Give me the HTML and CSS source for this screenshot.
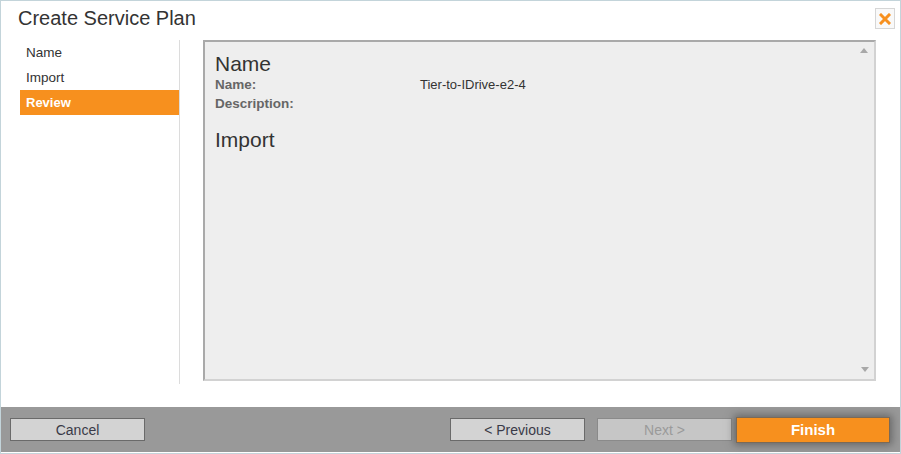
FILE: index.html
```html
<!DOCTYPE html>
<html>
<head>
<meta charset="utf-8">
<link rel="stylesheet" href="styles.css">
</head>
<body>
<div class="dialog">
  <div class="header">
    <div class="title">Create Service Plan</div>
    <button class="close" aria-label="Close">
      <svg width="12" height="12" viewBox="0 0 12 12"><path d="M2 2 L10 10 M10 2 L2 10" stroke="#f7901e" stroke-width="3" stroke-linecap="square"/></svg>
    </button>
  </div>
  <div class="main">
    <ul class="nav">
      <li class="nav-item">Name</li>
      <li class="nav-item">Import</li>
      <li class="nav-item active">Review</li>
    </ul>
    <div class="sep"></div>
    <div class="panel">
      <div class="content">
        <h2 class="section first">Name</h2>
        <div class="row"><span class="label">Name:</span><span class="value">Tier-to-IDrive-e2-4</span></div>
        <div class="row"><span class="label">Description:</span><span class="value"></span></div>
        <h2 class="section">Import</h2>
      </div>
      <div class="scroll">
        <span class="arrow up"></span>
        <span class="arrow down"></span>
      </div>
    </div>
  </div>
  <div class="footer">
    <button class="btn">Cancel</button>
    <div class="spacer"></div>
    <button class="btn">&lt; Previous</button>
    <button class="btn disabled">Next &gt;</button>
    <button class="btn primary">Finish</button>
  </div>
</div>
</body>
</html>
```
FILE: styles.css
```css
* { box-sizing: border-box; }
html, body { margin: 0; padding: 0; background: #fff; }
body { font-family: "Liberation Sans", Arial, sans-serif; color: #333; }
.dialog {
  width: 901px; height: 454px;
  border: 1px solid #c3d4da;
  display: flex; flex-direction: column;
  background: #fff;
}
.header {
  height: 39px;
  display: flex; align-items: flex-start; justify-content: space-between;
  padding: 0 5px 0 17px;
}
.title { font-size: 20px; line-height: 20px; padding-top: 7px; color: #333; }
.close {
  margin-top: 7px;
  width: 20px; height: 21px; padding: 0;
  border: 1px solid #d6d6d6; background: #f9f9f9;
  display: flex; align-items: center; justify-content: center;
}
.main { height: 367px; display: flex; align-items: flex-start; padding-left: 19px; }
.nav { list-style: none; margin: 0; padding: 0; width: 159px; }
.nav-item { height: 25px; line-height: 25px; padding-left: 6px; font-size: 13.5px; color: #333; }
.nav-item.active { background: #f7901e; color: #fff; font-weight: bold; font-size: 13px; }
.sep { width: 1px; height: 344px; background: #dcdcdc; margin-right: 23px; }
.panel {
  width: 673px; height: 341px;
  background: #eeeeee;
  border-top: 2px solid #a9a9a9; border-left: 2px solid #a9a9a9;
  border-right: 2px solid #d2d2d2; border-bottom: 2px solid #d2d2d2;
  display: flex;
}
.content { flex: 1; padding: 11px 0 0 10px; }
.section { margin: 0; font-weight: normal; font-size: 21px; line-height: 22px; color: #333; }
.row + .section { margin-top: 16px; }
.row { display: flex; height: 19px; line-height: 19px; }
.label { width: 205px; font-weight: bold; color: #666; font-size: 13.5px; }
.value { color: #333; font-size: 13px; }
.scroll { width: 20px; display: flex; flex-direction: column; justify-content: space-between; align-items: center; padding: 6px 0 7px; }
.arrow { width: 0; height: 0; border-left: 4px solid transparent; border-right: 4px solid transparent; }
.arrow.up { border-bottom: 5px solid #a8a8a8; }
.arrow.down { border-top: 5px solid #a8a8a8; margin-left: 2px; }
.footer {
  height: 45px; background: #999999;
  display: flex; align-items: center;
  padding: 0 10px 0 9px;
}
.spacer { flex: 1; }
.btn {
  width: 135px; height: 23px; padding: 0;
  background: #d3d3d3; border: 1px solid #6a6a6a;
  font-family: "Liberation Sans", Arial, sans-serif; font-size: 14px; color: #3a3a48;
}
.btn + .btn { margin-left: 12px; }
.btn.disabled { background: #c6c6c6; color: #9a9a9a; border-color: #8a8a8a; }
.btn.primary {
  width: 154px; height: 26px; margin-left: 4px;
  background: #f7901e; color: #fff; font-weight: bold; font-size: 15px;
  border: 1px solid #7a6a58;
  box-shadow: 0 0 8px 2px rgba(60,60,60,0.55);
}
```
